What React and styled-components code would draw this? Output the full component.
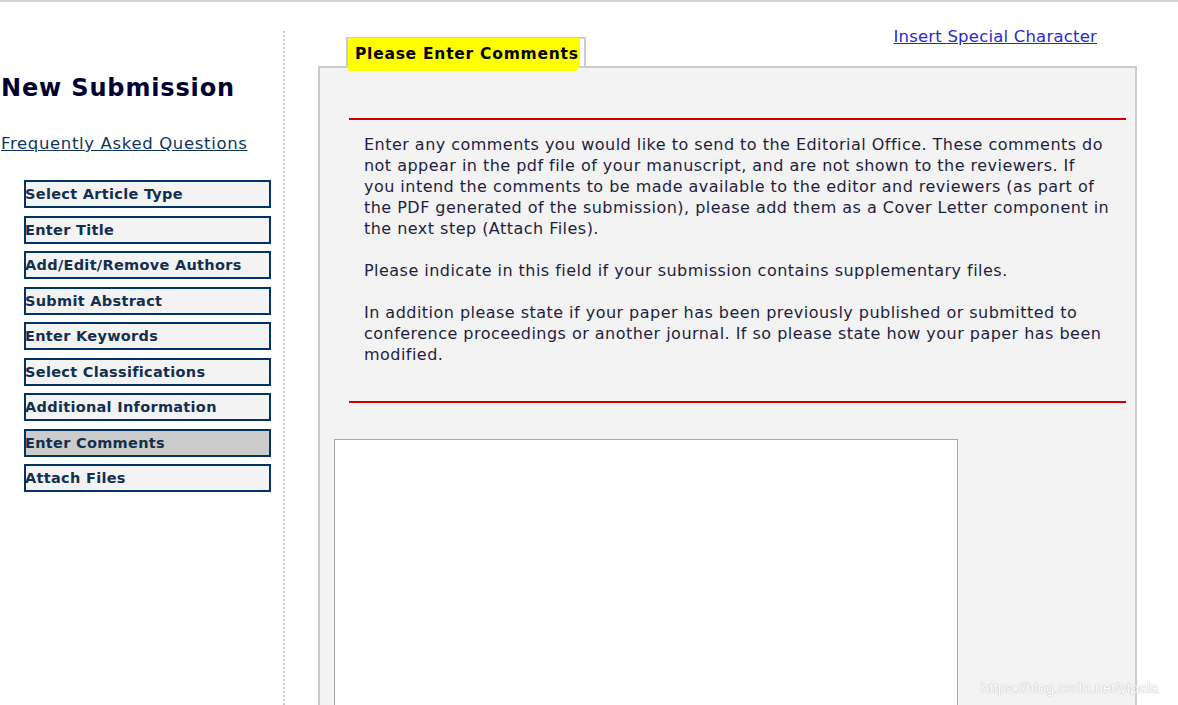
import React from "react";
import styled, { createGlobalStyle } from "styled-components";

const Global = createGlobalStyle`
  html, body { margin: 0; padding: 0; background: #ffffff; }
  body { font-family: Verdana, "DejaVu Sans", sans-serif; overflow: hidden; }
`;

const Page = styled.div`
  height: 705px;
  border-top: 2px solid #d3d3d3;
  box-sizing: border-box;
  display: flex;
  position: relative;
  overflow: hidden;
`;

const Sidebar = styled.aside`
  width: 283px;
  flex: none;
  margin-top: 29px;
  border-right: 2px dotted #c8c8c8;
  display: flex;
  flex-direction: column;
`;

const Title = styled.h1`
  margin: 42px 0 0 1px;
  font-size: 24px;
  font-weight: bold;
  color: #000033;
  line-height: 30px;
  letter-spacing: 0.85px;
`;

const FaqLink = styled.a`
  margin: 30px 0 0 1px;
  font-size: 16.5px;
  color: #0f3460;
  text-decoration: underline;
  line-height: 22px;
  letter-spacing: 0.65px;
  align-self: flex-start;
`;

const Nav = styled.nav`
  margin: 25px 0 0 24px;
  display: flex;
  flex-direction: column;
  gap: 7.5px;
`;

const NavItem = styled.div`
  width: 247px;
  height: 28px;
  box-sizing: border-box;
  border: 2px solid #003366;
  background: ${(p) => (p.$active ? "#cccccc" : "#f3f3f3")};
  color: #132f50;
  font-weight: bold;
  font-size: 14.5px;
  line-height: 24px;
  white-space: nowrap;
  letter-spacing: 0.3px;
  text-indent: -1px;
`;

const Main = styled.main`
  flex: 1;
  min-width: 0;
  display: flex;
  flex-direction: column;
`;

const Header = styled.div`
  flex: none;
  height: 64px;
  display: flex;
  align-items: flex-end;
  position: relative;
`;

const Tab = styled.div`
  margin-left: 61px;
  width: 240px;
  height: 29px;
  box-sizing: border-box;
  border: 2px solid #cccccc;
  border-bottom: none;
  display: flex;
  align-items: center;
`;

const Highlight = styled.span`
  background: #ffff00;
  font-weight: bold;
  font-size: 15.5px;
  color: #000000;
  padding: 7px 1px 8px 7px;
  margin-top: 4px;
  white-space: nowrap;
  letter-spacing: 0.75px;
  border-radius: 3px 1px 6px 2px;
`;

const SpecialLink = styled.a`
  position: absolute;
  right: 81px;
  top: 24px;
  font-size: 16.5px;
  color: #2a2ad0;
  text-decoration: underline;
  line-height: 22px;
  letter-spacing: 0.2px;
`;

const Panel = styled.section`
  margin-left: 33px;
  width: 819px;
  flex: 1;
  min-height: 0;
  overflow: hidden;
  box-sizing: border-box;
  border: 2px solid #cccccc;
  border-bottom: none;
  background: #f3f3f3;
  padding: 50px 9px 0 14px;
`;

const Rule = styled.div`
  height: 2px;
  background: #cc0000;
  margin-left: 15px;
`;

const Instructions = styled.div`
  padding: 14px 0 36px 30px;
  color: #1e1e40;
  font-size: 16px;
  line-height: 21px;
  letter-spacing: 0.47px;
  white-space: nowrap;
`;

const Para = styled.p`
  margin: 0 0 21px 0;
  &:last-child { margin-bottom: 0; }
`;

const CommentBox = styled.textarea`
  display: block;
  margin-top: 36px;
  width: 624px;
  height: 300px;
  box-sizing: border-box;
  border: 1px solid #a9a9a9;
  background: #ffffff;
  resize: none;
  outline: none;
`;

const Watermark = styled.div`
  position: absolute;
  left: 981px;
  top: 677px;
  font-family: "Liberation Sans", Arial, sans-serif;
  font-size: 15px;
  color: #ffffff;
  text-shadow: 0 0 1px #bbbbbb, 0 0 1px #bbbbbb;
  opacity: 0.9;
`;

const steps = [
  "Select Article Type",
  "Enter Title",
  "Add/Edit/Remove Authors",
  "Submit Abstract",
  "Enter Keywords",
  "Select Classifications",
  "Additional Information",
  "Enter Comments",
  "Attach Files",
];

const paragraphs = [
  [
    "Enter any comments you would like to send to the Editorial Office. These comments do",
    "not appear in the pdf file of your manuscript, and are not shown to the reviewers. If",
    "you intend the comments to be made available to the editor and reviewers (as part of",
    "the PDF generated of the submission), please add them as a Cover Letter component in",
    "the next step (Attach Files).",
  ],
  ["Please indicate in this field if your submission contains supplementary files."],
  [
    "In addition please state if your paper has been previously published or submitted to",
    "conference proceedings or another journal. If so please state how your paper has been",
    "modified.",
  ],
];

export default function App() {
  return (
    <>
      <Global />
      <Page>
        <Sidebar>
          <Title>New Submission</Title>
          <FaqLink href="#">Frequently Asked Questions</FaqLink>
          <Nav>
            {steps.map((s) => (
              <NavItem key={s} $active={s === "Enter Comments"}>
                {s}
              </NavItem>
            ))}
          </Nav>
        </Sidebar>
        <Main>
          <Header>
            <Tab>
              <Highlight>Please Enter Comments</Highlight>
            </Tab>
            <SpecialLink href="#">Insert Special Character</SpecialLink>
          </Header>
          <Panel>
            <Rule />
            <Instructions>
              {paragraphs.map((lines, i) => (
                <Para key={i}>
                  {lines.map((l, j) => (
                    <React.Fragment key={j}>
                      {j > 0 && <br />}
                      {l}
                    </React.Fragment>
                  ))}
                </Para>
              ))}
            </Instructions>
            <Rule />
            <CommentBox />
          </Panel>
        </Main>
        <Watermark>https://blog.csdn.net/yipala</Watermark>
      </Page>
    </>
  );
}
